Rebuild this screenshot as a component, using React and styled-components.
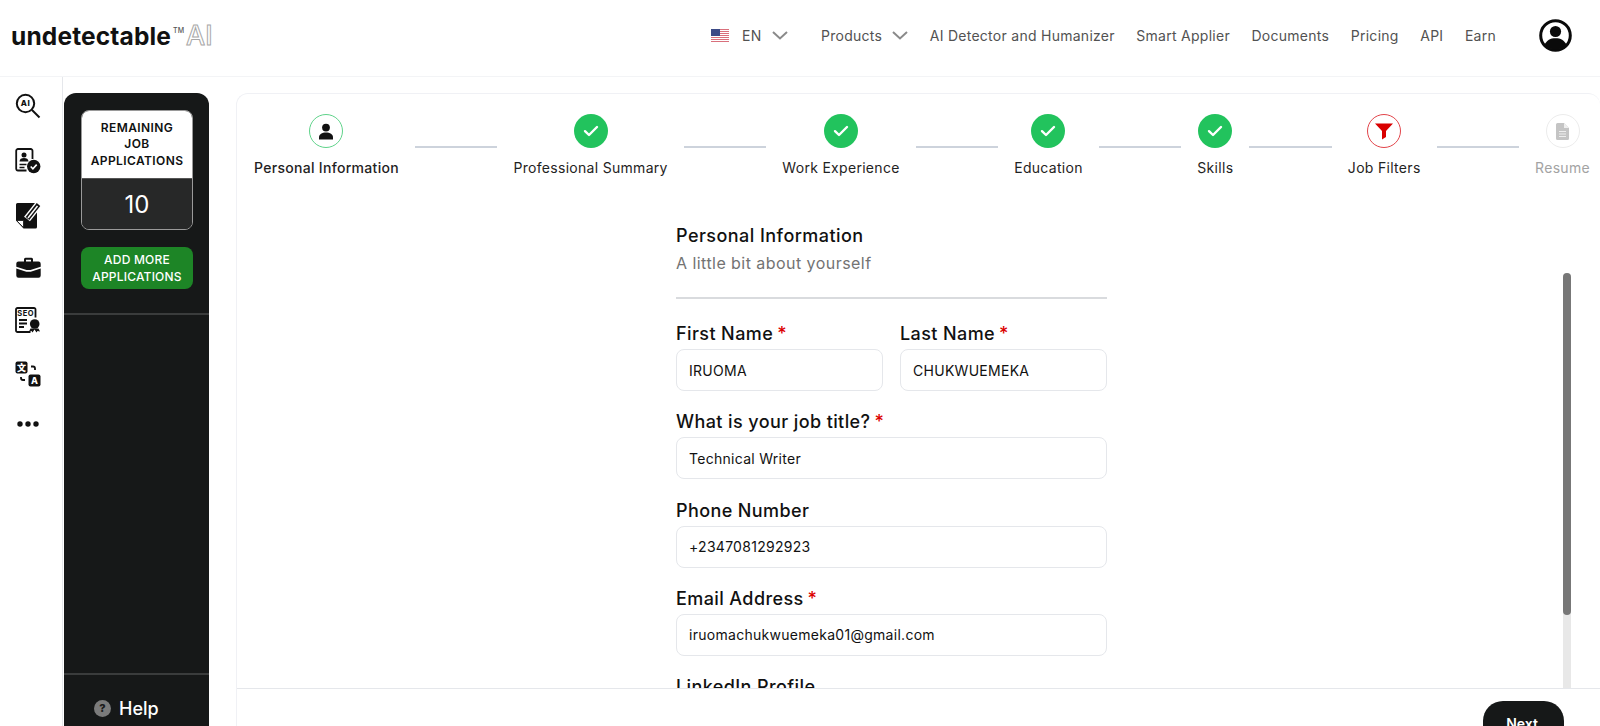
import React from "react";
import styled, { createGlobalStyle } from "styled-components";

const Global = createGlobalStyle`
  html, body { margin: 0; padding: 0; height: 726px; overflow: hidden; background: #fff; }
  #root { height: 726px; }
  * { box-sizing: border-box; }
  body { font-family: "Inter", "Liberation Sans", sans-serif; color: #0f1111; }
`;

const Page = styled.div`
  height: 726px; width: 1600px; display: flex; flex-direction: column; overflow: hidden;
`;
const Header = styled.header`
  height: 77px; flex: none; display: flex; align-items: center; padding: 0 28px 5px 11px;
  border-bottom: 1px solid #f3f4f6;
`;
const Logo = styled.div`
  display: flex; align-items: flex-start; margin-right: auto; padding-top: 1px;
`;
const LogoWord = styled.span`
  font-size: 24.500px; font-weight: 700; letter-spacing: 0.15px; color: #111; line-height: 30px;
`;
const Tm = styled.span`
  font-size: 7px; font-weight: 500; color: #555; margin: 5px 2px 0 2px; line-height: 10px;
`;
const LogoAI = styled.span`
  font-size: 27px; font-weight: 500; line-height: 30px; color: #fff;
  -webkit-text-stroke: 1px #a8a8a8;
`;
const Nav = styled.nav`
  display: flex; align-items: center; gap: 21.500px; font-size: 14px; color: #525252; margin-right: 43px;
`;
const NavItem = styled.span`
  display: flex; align-items: center; gap: ${p => p.$gap || 10}px; white-space: nowrap; letter-spacing: 0.27px;
`;
const Lang = styled(NavItem)`
  margin-right: 12px;
`;
const LangCode = styled.span`
  margin-left: 3px;
`;
const Body = styled.div`
  flex: 1; display: flex; min-height: 0;
`;
const Rail = styled.aside`
  width: 63px; flex: none; border-right: 1px solid #e5e7eb; display: flex; flex-direction: column;
  align-items: center; padding: 15px 6px 0 0; margin-right: 1px;
`;
const RailIcon = styled.div`
  height: ${p => p.$h}px; margin-top: ${p => p.$mt || 0}px; display: flex; align-items: center; justify-content: center;
`;
const Sidebar = styled.aside`
  width: 145px; flex: none; margin-top: 16px; background: #161818; border-radius: 12px 12px 0 0;
  display: flex; flex-direction: column; color: #fff;
`;
const SideTop = styled.div`
  height: 222px; flex: none; padding: 17px 16px 0 17px; border-bottom: 2px solid #3a3c3c;
`;
const Counter = styled.div`
  border-radius: 8px; border: 1px solid #9a9a9a; overflow: hidden; height: 120px; display: flex; flex-direction: column;
`;
const CounterTitle = styled.div`
  background: #fff; color: #0f1111; height: 68px; display: flex; align-items: center; justify-content: center;
  text-align: center; font-size: 12px; font-weight: 600; line-height: 16.500px; letter-spacing: 0.4px; border-bottom: 1px solid #555;
`;
const CounterValue = styled.div`
  flex: 1; background: #272828; display: flex; align-items: center; justify-content: center; font-size: 24px; font-weight: 400; color: #fff;
`;
const AddMore = styled.button`
  display: block; width: 112px; height: 42px; margin-top: 17px; background: #1d8526; color: #fff; border: 0; border-radius: 8px;
  font: 500 12px/17px "Inter", sans-serif; letter-spacing: 0.2px; padding: 0;
`;
const SideSpacer = styled.div`
  flex: 1;
`;
const HelpRow = styled.div`
  height: 53px; flex: none; border-top: 2px solid #3a3c3c; display: flex; align-items: center; gap: 8px; padding: 15px 0 0 30px;
  font-size: 18px; font-weight: 500;
`;
const HelpDot = styled.span`
  width: 17px; height: 17px; border-radius: 50%; background: #7b7b7b; color: #1a1a1a; display: flex; align-items: center; justify-content: center;
  font-size: 11px; font-weight: 800;
`;
const Panel = styled.main`
  margin: 16px 0 0 27px; flex: 1; min-width: 0; border: 1px solid #f0f1f5; border-bottom: 0; border-right: 0; border-radius: 12px 12px 0 0;
  display: flex; flex-direction: column; position: relative;
`;
const Stepper = styled.div`
  height: 92px; flex: none; display: flex; align-items: flex-start; gap: 16px; padding: 20px 10px 0 17px;
`;
const Step = styled.div`
  flex: none; display: flex; flex-direction: column; align-items: center; gap: 10px;
`;
const Circle = styled.div`
  width: 34px; height: 34px; border-radius: 50%; display: flex; align-items: center; justify-content: center;
  background: ${p => p.$bg || "#fff"}; border: 1px solid ${p => p.$bd || "transparent"};
`;
const StepLabel = styled.div`
  font-size: 14px; line-height: 20px; white-space: nowrap; color: ${p => p.$c || "#1f2323"}; font-weight: ${p => p.$w || 400}; letter-spacing: 0.3px;
`;
const Line = styled.div`
  flex: 1; height: 2px; background: #cdd3dc; margin-top: 32px;
`;
const Scroll = styled.div`
  flex: 1; min-height: 0; overflow: hidden; padding: 36px 0 0 439px;
`;
const Form = styled.div`
  width: 431px;
`;
const FormTitle = styled.div`
  font-size: 18px; font-weight: 500; line-height: 28px; color: #111; letter-spacing: 0.45px;
`;
const FormSub = styled.div`
  font-size: 16px; line-height: 26px; color: #737373; letter-spacing: 0.45px;
`;
const Rule = styled.hr`
  border: 0; height: 2px; background: #d9dbde; margin: 21px 0 23px;
`;
const Row = styled.div`
  display: grid; grid-template-columns: 1fr 1fr; gap: 17px;
`;
const Field = styled.div`
  margin-bottom: 19.300px;
`;
const FieldLabel = styled.div`
  font-size: 18px; font-weight: 500; line-height: 24px; color: #111; height: 27px; white-space: nowrap; letter-spacing: 0.4px;
`;
const Star = styled.span`
  color: #dc0000; margin-left: 4px;
`;
const FieldInput = styled.div`
  height: 42px; border: 1px solid #e5e7eb; border-radius: 8px; display: flex; align-items: center; padding: 0 12px;
  font-size: 14px; color: #111; letter-spacing: 0.28px; background: #fff;
`;
const Footer = styled.footer`
  height: 38px; flex: none; border-top: 1px solid #e5e7eb; background: #fff; position: relative; z-index: 1; display: flex; justify-content: flex-end;
  padding: 12px 36px 0 0; overflow: hidden;
`;
const Next = styled.button`
  width: 81px; height: 44px; flex: none; background: #161818; color: #fff; border: 0; border-radius: 20px; padding: 0 3px 0 0;
  font: 600 14px "Inter", sans-serif;
`;
const Track = styled.div`
  position: absolute; top: 179px; bottom: 38px; right: 29px; width: 8px; background: #e8e8e8; border-radius: 4px 4px 0 0;
`;
const Thumb = styled.div`
  height: 342px; background: #777; border-radius: 4px;
`;

const Flag = () => (
  <svg width="18" height="13" viewBox="0 0 18 13">
    <rect width="18" height="13" fill="#fff" />
    {[0, 2, 4, 6, 8, 10, 12].map(y => <rect key={y} y={y} width="18" height="1" fill="#d9707c" />)}
    <rect width="9" height="7" fill="#3c4a86" />
  </svg>
);
const Chevron = () => (
  <svg width="16" height="9" viewBox="0 0 16 9" fill="none" stroke="#8a8a8a" strokeWidth="2"><path d="M1 1l7 6.500L15 1" /></svg>
);
const UserBig = () => (
  <svg width="33" height="33" viewBox="0 0 33 33">
    <circle cx="16.500" cy="16.500" r="14.800" fill="#fff" stroke="#0a0a0a" strokeWidth="3" />
    <circle cx="16.500" cy="12.500" r="5.600" fill="#0a0a0a" />
    <path d="M5.500 26c2-5 6-6.800 11-6.800s9 1.800 11 6.800c-3 3-7 4.500-11 4.500s-8-1.500-11-4.500z" fill="#0a0a0a" />
  </svg>
);
const Check = () => (
  <svg width="16" height="12" viewBox="0 0 16 12" fill="none" stroke="#fff" strokeWidth="2.400" strokeLinecap="round" strokeLinejoin="round"><path d="M2 6.200L6 10l8-8" /></svg>
);
const Person = () => (
  <svg width="16" height="17" viewBox="0 0 16 17" fill="#111">
    <circle cx="8" cy="4.600" r="3.900" />
    <path d="M1 16.500v-2.200C1 11.400 4 9.600 8 9.600s7 1.800 7 4.700v2.200z" />
  </svg>
);
const Funnel = () => (
  <svg width="18" height="17" viewBox="0 0 18 17" fill="#d90000"><path d="M0 .5h18L11 8v6l-4 2.500V8z" /></svg>
);
const Doc = () => (
  <svg width="13" height="17" viewBox="0 0 13 17">
    <path d="M1.500 0H8l5 5v10.500a1.500 1.500 0 01-1.500 1.500h-10A1.500 1.500 0 010 15.500V1.500A1.500 1.500 0 011.500 0z" fill="#c4c4c4" />
    <path d="M8 0l5 5H8z" fill="#eee" />
    <path d="M3 8.500h7M3 11h7M3 13.500h7" stroke="#eee" strokeWidth="1" />
  </svg>
);
const IconSearchAI = () => (
  <svg width="26" height="26" viewBox="0 0 26 26" fill="none" stroke="#111">
    <circle cx="10.500" cy="10.500" r="8.700" strokeWidth="2" />
    <path d="M17 17l7.500 7.500" strokeWidth="2" />
    <text x="10.500" y="13.400" fontSize="8" fontWeight="800" textAnchor="middle" fill="#111" stroke="none" fontFamily="Inter" letterSpacing="0.5">AI</text>
  </svg>
);
const IconResume = () => (
  <svg width="26" height="26" viewBox="0 0 26 26" fill="none">
    <path d="M17.500 11V2.800A1.800 1.800 0 0015.700 1H3a1.800 1.800 0 00-1.800 1.800v18A1.800 1.800 0 003 22.500h8.500" stroke="#111" strokeWidth="1.800" />
    <circle cx="9" cy="7" r="2.500" fill="#111" />
    <path d="M4.500 13.500c0-2.500 2-3.500 4.500-3.500s4.500 1 4.500 3.500z" fill="#111" />
    <path d="M4.500 16.500h7M4.500 19.500h5" stroke="#111" strokeWidth="1.600" />
    <circle cx="18.700" cy="18.500" r="6.700" fill="#111" />
    <path d="M15.700 18.500l2.200 2.300 3.800-4.200" stroke="#fff" strokeWidth="1.600" />
  </svg>
);
const IconNote = () => (
  <svg width="26" height="27" viewBox="0 0 26 27" fill="none">
    <path d="M2.500 1h18A1.500 1.500 0 0122 2.500V25a1.500 1.500 0 01-1.500 1.500H8.500L1 18.500V2.500A1.500 1.500 0 012.500 1z" fill="#111" />
    <path d="M23.500 2.500L12 17" stroke="#fff" strokeWidth="7.500" />
    <path d="M23.500 2.500L12.500 16.500" stroke="#111" strokeWidth="4.500" />
    <path d="M22.500 4L13 16" stroke="#fff" strokeWidth="1.500" />
    <path d="M10 15.500l-1 3.800 3.800-1.300z" fill="#111" />
    <path d="M1.500 18.500H8.500V25.500z" fill="#fff" stroke="#111" strokeWidth="0.800" />
  </svg>
);
const IconCase = () => (
  <svg width="25" height="21" viewBox="0 0 25 21" fill="#111">
    <path d="M8 5V2.200A1.500 1.500 0 019.500.7h6A1.500 1.500 0 0117 2.200V5h-2V2.700h-5V5z" />
    <path d="M2.500 4.500h20a2.200 2.200 0 012.200 2.200v3L14.500 13h-4L.3 9.700v-3a2.200 2.200 0 012.200-2.200z" />
    <path d="M.3 11.500l10 3.300h4.400l10-3.300v7a2.200 2.200 0 01-2.200 2.200h-20a2.200 2.200 0 01-2.200-2.200z" />
  </svg>
);
const IconSeo = () => (
  <svg width="26" height="26" viewBox="0 0 26 26" fill="none">
    <path d="M20.500 10.500V2.500A1.500 1.500 0 0019 1H2.500A1.500 1.500 0 001 2.500v21A1.500 1.500 0 002.500 25h13" stroke="#111" strokeWidth="1.800" />
    <text x="10.700" y="8.500" fontSize="7.500" fontWeight="700" textAnchor="middle" fill="#111" letterSpacing="0.6" fontFamily="Inter">SEO</text>
    <path d="M4 13h8M4 16.500h8M4 20h5" stroke="#111" strokeWidth="1.900" />
    <circle cx="19.700" cy="17" r="4.800" fill="#111" />
    <path d="M15.500 21.500l-1.500 3 2.500-.5 1 1.500 2-3 2 3 1-1.500 2.500.5-1.500-3z" fill="#111" />
  </svg>
);
const IconTranslate = () => (
  <svg width="26" height="26" viewBox="0 0 26 26" fill="none">
    <rect x="0.500" y="0.500" width="12" height="12" rx="2" fill="#111" />
    <text x="6.500" y="10" fontSize="9" fontWeight="800" textAnchor="middle" fill="#fff" fontFamily="Noto Sans CJK SC">文</text>
    <rect x="13.500" y="13.500" width="12" height="12" rx="2" fill="#111" />
    <text x="19.500" y="23" fontSize="9" fontWeight="800" textAnchor="middle" fill="#fff" fontFamily="Inter">A</text>
    <path d="M16 5.500h2a2 2 0 012 2v1.500" stroke="#111" strokeWidth="1.800" />
    <path d="M6 16v1a2 2 0 002 2h2" stroke="#111" strokeWidth="1.800" />
  </svg>
);
const IconDots = () => (
  <svg width="22" height="6" viewBox="0 0 22 6" fill="#111"><circle cx="3" cy="3" r="2.700" /><circle cx="11" cy="3" r="2.700" /><circle cx="19" cy="3" r="2.700" /></svg>
);

const steps = [
  { label: "Personal Information", w: 500, icon: <Person />, bd: "#5fd38a" },
  { label: "Professional Summary", icon: <Check />, bg: "#22c35d" },
  { label: "Work Experience", icon: <Check />, bg: "#22c35d" },
  { label: "Education", icon: <Check />, bg: "#22c35d" },
  { label: "Skills", icon: <Check />, bg: "#22c35d" },
  { label: "Job Filters", icon: <Funnel />, bd: "#e2444a" },
  { label: "Resume", icon: <Doc />, bd: "#ececec", c: "#a3a3a3" },
];

const F = ({ label, req, value }) => (
  <Field>
    <FieldLabel>{label}{req && <Star>*</Star>}</FieldLabel>
    {value !== undefined && <FieldInput>{value}</FieldInput>}
  </Field>
);

export default function App() {
  return (
    <Page>
      <Global />
      <Header>
        <Logo>
          <LogoWord>undetectable</LogoWord>
          <Tm>TM</Tm>
          <LogoAI>AI</LogoAI>
        </Logo>
        <Nav>
          <Lang><Flag /><LangCode>EN</LangCode><Chevron /></Lang>
          <NavItem>Products<Chevron /></NavItem>
          <NavItem>AI Detector and Humanizer</NavItem>
          <NavItem>Smart Applier</NavItem>
          <NavItem>Documents</NavItem>
          <NavItem>Pricing</NavItem>
          <NavItem>API</NavItem>
          <NavItem>Earn</NavItem>
        </Nav>
        <UserBig />
      </Header>
      <Body>
        <Rail>
          <RailIcon $h={28}><IconSearchAI /></RailIcon>
          <RailIcon $h={27} $mt={27}><IconResume /></RailIcon>
          <RailIcon $h={27} $mt={28}><IconNote /></RailIcon>
          <RailIcon $h={24} $mt={26}><IconCase /></RailIcon>
          <RailIcon $h={27} $mt={27}><IconSeo /></RailIcon>
          <RailIcon $h={27} $mt={27}><IconTranslate /></RailIcon>
          <RailIcon $h={10} $mt={32}><IconDots /></RailIcon>
        </Rail>
        <Sidebar>
          <SideTop>
            <Counter>
              <CounterTitle>REMAINING<br />JOB<br />APPLICATIONS</CounterTitle>
              <CounterValue>10</CounterValue>
            </Counter>
            <AddMore>ADD MORE<br />APPLICATIONS</AddMore>
          </SideTop>
          <SideSpacer />
          <HelpRow><HelpDot>?</HelpDot>Help</HelpRow>
        </Sidebar>
        <Panel>
          <Stepper>
            {steps.map((s, i) => (
              <React.Fragment key={s.label}>
                {i > 0 && <Line />}
                <Step>
                  <Circle $bg={s.bg} $bd={s.bd}>{s.icon}</Circle>
                  <StepLabel $c={s.c} $w={s.w}>{s.label}</StepLabel>
                </Step>
              </React.Fragment>
            ))}
          </Stepper>
          <Scroll>
            <Form>
              <FormTitle>Personal Information</FormTitle>
              <FormSub>A little bit about yourself</FormSub>
              <Rule />
              <Row>
                <F label="First Name" req value="IRUOMA" />
                <F label="Last Name" req value="CHUKWUEMEKA" />
              </Row>
              <F label="What is your job title?" req value="Technical Writer" />
              <F label="Phone Number" value="+2347081292923" />
              <F label="Email Address" req value="iruomachukwuemeka01@gmail.com" />
              <F label="LinkedIn Profile" />
            </Form>
          </Scroll>
          <Track><Thumb /></Track>
          <Footer><Next>Next</Next></Footer>
        </Panel>
      </Body>
    </Page>
  );
}
